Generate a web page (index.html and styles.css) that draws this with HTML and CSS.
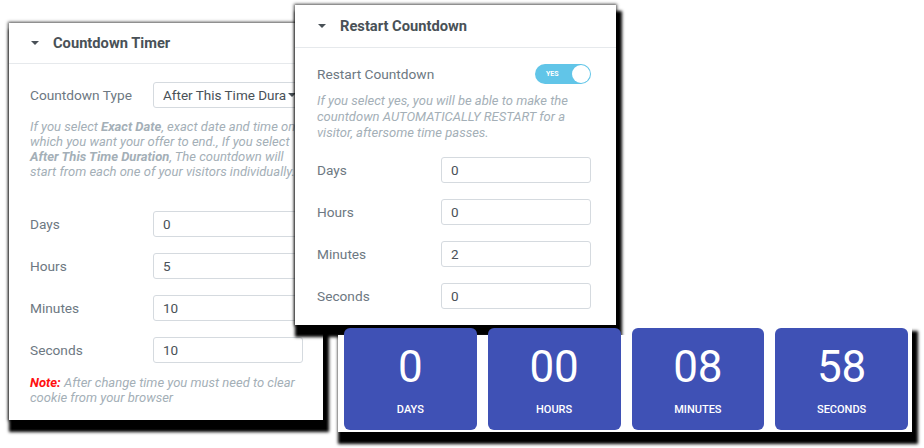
FILE: index.html
```html
<!DOCTYPE html>
<html lang="en">
<head>
    <meta charset="UTF-8">
    <meta name="viewport" content="width=device-width, initial-scale=1.0">
    <title>Countdown Timer Settings</title>
    <link rel="stylesheet" href="styles.css">
</head>
<body>
    <div class="canvas">
        <!-- Countdown Timer panel -->
        <div class="panel panel-timer">
            <div class="panel-head">
                <span class="caret"></span>
                <h2>Countdown Timer</h2>
            </div>
            <div class="panel-body">
                <div class="row">
                    <label>Countdown Type</label>
                    <div class="select"><span>After This Time Duration</span><i class="select-caret"></i></div>
                </div>
                <p class="help help-type">If you select <b>Exact Date</b>, exact date and time on which you want your offer to end., If you select <b>After This Time Duration</b>, The countdown will start from each one of your visitors individually.</p>
                <div class="fields">
                    <div class="row"><label>Days</label><input class="field" type="text" value="0"></div>
                    <div class="row"><label>Hours</label><input class="field" type="text" value="5"></div>
                    <div class="row"><label>Minutes</label><input class="field" type="text" value="10"></div>
                    <div class="row"><label>Seconds</label><input class="field" type="text" value="10"></div>
                </div>
                <p class="help help-note"><b class="note">Note:</b> After change time you must need to clear cookie from your browser</p>
            </div>
        </div>

        <!-- Restart Countdown panel -->
        <div class="panel panel-restart">
            <div class="panel-head">
                <span class="caret"></span>
                <h2>Restart Countdown</h2>
            </div>
            <div class="panel-body">
                <div class="row row-toggle">
                    <label>Restart Countdown</label>
                    <div class="toggle"><span>YES</span><i class="knob"></i></div>
                </div>
                <p class="help help-restart">If you select yes, you will be able to make the countdown AUTOMATICALLY RESTART for a visitor, aftersome time passes.</p>
                <div class="fields">
                    <div class="row"><label>Days</label><input class="field" type="text" value="0"></div>
                    <div class="row"><label>Hours</label><input class="field" type="text" value="0"></div>
                    <div class="row"><label>Minutes</label><input class="field" type="text" value="2"></div>
                    <div class="row"><label>Seconds</label><input class="field" type="text" value="0"></div>
                </div>
            </div>
        </div>

        <!-- Countdown preview -->
        <div class="clock">
            <div class="unit"><span class="num">0</span><span class="unit-label">Days</span></div>
            <div class="unit"><span class="num">00</span><span class="unit-label">Hours</span></div>
            <div class="unit"><span class="num">08</span><span class="unit-label">Minutes</span></div>
            <div class="unit"><span class="num">58</span><span class="unit-label">Seconds</span></div>
        </div>
    </div>
</body>
</html>
```

FILE: styles.css
```css
body {
    margin: 0;
    background: #fff;
    font-family: Roboto, "Liberation Sans", Arial, sans-serif;
    color: #6d7882;
}
.canvas {
    position: relative;
    width: 924px;
    height: 448px;
    overflow: hidden;
}

/* panels */
.panel {
    position: absolute;
    background: #fff;
    box-shadow: 0 0 3px 1px rgba(0, 0, 0, 0.7), 3px 9px 3px 3px #000;
}
.panel-timer { left: 9px; top: 23px; width: 314px; height: 397px; }
.panel-restart { left: 295px; top: 5px; width: 321px; height: 320px; }

.panel-head {
    display: flex;
    align-items: center;
    height: 40px;
    padding-left: 22px;
    border-bottom: 1px solid #e6e9ec;
}
.panel-restart .panel-head { height: 42px; padding-left: 23px; }
.caret {
    width: 0;
    height: 0;
    border-left: 4px solid transparent;
    border-right: 4px solid transparent;
    border-top: 4px solid #495157;
    margin-right: 14px;
}
.panel-head h2 {
    margin: 0;
    font-size: 14.7px;
    font-weight: 700;
    color: #495157;
}

.panel-body { padding: 18px 20px 0 21px; }
.panel-restart .panel-body { padding: 16px 25px 0 22px; }

.row {
    display: flex;
    align-items: center;
    justify-content: space-between;
    height: 26px;
}
.row label { font-size: 13.7px; }

.fields {
    display: flex;
    flex-direction: column;
    gap: 16px;
}

.field, .select {
    box-sizing: border-box;
    width: 150px;
    height: 26px;
    border: 1px solid #d5dadf;
    border-radius: 3px;
    padding: 0 9px;
    font-family: inherit;
    font-size: 13.5px;
    color: #495157;
    background: #fff;
    outline: none;
}
.select {
    display: flex;
    align-items: center;
    justify-content: space-between;
    overflow: hidden;
    padding-right: 6px;
}
.select span {
    white-space: nowrap;
    overflow: hidden;
    width: 123px;
}
.select-caret {
    flex: none;
    border-left: 4px solid transparent;
    border-right: 4px solid transparent;
    border-top: 4px solid #495157;
}

.help {
    margin: 0;
    font-size: 13px;
    font-style: italic;
    line-height: 15px;
    color: #a4afb7;
}
.help b { font-weight: 700; }
.help-type { margin: 11px -8px 32px 0; }
.help-note { margin-top: 12px; }
.note { color: #ff1010; }
.help-restart { margin: 9px 0 16px; line-height: 16px; }

/* switch */
.row-toggle { height: 20px; }
.toggle {
    display: flex;
    align-items: center;
    justify-content: space-between;
    box-sizing: border-box;
    width: 56px;
    height: 20px;
    padding: 0 1px 0 11px;
    border-radius: 10px;
    background: #61c5e8;
}
.toggle span {
    font-size: 7px;
    font-weight: 700;
    color: #fff;
}
.knob {
    width: 18px;
    height: 18px;
    border-radius: 50%;
    background: #fff;
}

/* countdown boxes */
.clock {
    position: absolute;
    left: 338px;
    top: 325px;
    width: 574px;
    height: 107px;
    box-sizing: border-box;
    padding: 3px 4px 2px 6px;
    display: grid;
    grid-template-columns: repeat(4, 1fr);
    gap: 11px;
    background: linear-gradient(transparent 10px, #fff 10px);
    box-shadow: 3px 9px 3px 3px #000;
}
.unit {
    display: flex;
    flex-direction: column;
    align-items: center;
    border-radius: 6px;
    background: #3f51b5;
    color: #fff;
}
.num {
    margin-top: 14px;
    font-size: 44px;
    line-height: 50px;
}
.unit-label {
    margin-top: 11px;
    font-size: 11px;
    font-weight: 500;
    text-transform: uppercase;
}
```
